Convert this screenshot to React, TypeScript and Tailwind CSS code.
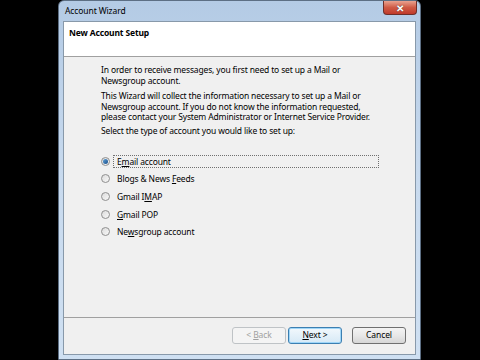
import React from 'react';

const font = { fontFamily: '"Noto Sans", "Open Sans", sans-serif' };

function Radio({ checked }: { checked?: boolean }) {
  return (
    <span className="w-[9px] h-[9px] rounded-full border border-[#8f8f8f] bg-gradient-to-br from-[#dcdcdc] to-[#f8f8f8] flex items-center justify-center shrink-0">
      {checked && <span className="w-[5px] h-[5px] rounded-full bg-gradient-to-br from-[#5fa2d8] to-[#1b4f8a]" />}
    </span>
  );
}

function Option({ children, checked, focused }: { children: React.ReactNode; checked?: boolean; focused?: boolean }) {
  return (
    <div className="flex items-center h-[17.6px]">
      <Radio checked={checked} />
      <span
        className={`ml-[3px] h-[13px] block pl-[3px] leading-[11px] ${focused ? 'w-[266px] border border-dotted border-[#707070]' : 'border border-transparent'}`}
      >
        {children}
      </span>
    </div>
  );
}

function Btn({ children, kind }: { children: React.ReactNode; kind: 'disabled' | 'default' | 'normal' }) {
  const cls =
    kind === 'disabled'
      ? 'border-[#bfc3c6] bg-[#f4f4f4] text-[#a0a0a0]'
      : kind === 'default'
      ? 'border-[#3c7fb1] bg-gradient-to-b from-[#f2f8fc] to-[#d6e9f6] text-black shadow-[inset_0_0_0_1px_#9fd6f8]'
      : 'border-[#707070] bg-gradient-to-b from-[#f4f4f4] via-[#e8e8e8] to-[#d6d6d6] text-black';
  return (
    <div className={`w-[54px] h-[17px] rounded-[3px] border flex items-center justify-center text-[8.5px] tracking-[-0.1px] ${cls}`}>
      <span>{children}</span>
    </div>
  );
}

export default function App() {
  return (
    <div className="w-[480px] h-[360px] bg-black overflow-hidden" style={font}>
      <div className="ml-[58px] w-[363px] h-[360px] rounded-t-[6px] border border-[#5d6f84] bg-gradient-to-b from-[#b4cbe5] via-[#c8daee] to-[#cfe0f2] flex flex-col">
        {/* title bar */}
        <div className="h-[20px] flex items-start shrink-0">
          <div className="pl-[6px] pt-[4px] text-[8.5px] tracking-[-0.1px] leading-[12px] text-black">Account Wizard</div>
          <div className="ml-auto mr-[3px] w-[34px] h-[14px] rounded-b-[4px] border border-t-0 border-[#6e2f2a] bg-gradient-to-b from-[#e9a290] via-[#cf5a45] to-[#c0392b] flex items-center justify-center">
            <span className="text-white text-[10px] font-bold leading-none [text-shadow:0_0_1px_#333]">✕</span>
          </div>
        </div>
        {/* body */}
        <div className="mx-[4px] flex-1 border border-[#8899aa] bg-[#f0f0f0] flex flex-col">
          <div className="h-[35px] bg-white border-b border-[#a0a0a0] pl-[5px] pt-[5px] text-[8.5px] tracking-[-0.15px] font-bold leading-[12px] text-black shrink-0">
            New Account Setup
          </div>
          <div className="h-[261px] border-b border-[#a0a0a0] pl-[37px] pt-[8px] text-[8.5px] tracking-[-0.15px] leading-[10.6px] text-black shrink-0">
            <p>In order to receive messages, you first need to set up a Mail or<br />Newsgroup account.</p>
            <p className="mt-[5px]">
              This Wizard will collect the information necessary to set up a Mail or<br />
              Newsgroup account. If you do not know the information requested,<br />
              please contact your System Administrator or Internet Service Provider.
            </p>
            <p className="mt-[3px]">Select the type of account you would like to set up:</p>
            <div className="mt-[16px] flex flex-col">
              <Option checked focused>E<u>m</u>ail account</Option>
              <Option>Blogs &amp; News <u>F</u>eeds</Option>
              <Option>Gmail I<u>M</u>AP</Option>
              <Option><u>G</u>mail POP</Option>
              <Option>Ne<u>w</u>sgroup account</Option>
            </div>
          </div>
          <div className="flex-1 flex items-start pt-[9px] pl-[168px] gap-[2px]">
            <Btn kind="disabled">&lt; <u>B</u>ack</Btn>
            <Btn kind="default"><u>N</u>ext &gt;</Btn>
            <div className="w-[6px]" />
            <Btn kind="normal">Cancel</Btn>
          </div>
        </div>
        <div className="h-[4px] shrink-0" />
      </div>
    </div>
  );
}
